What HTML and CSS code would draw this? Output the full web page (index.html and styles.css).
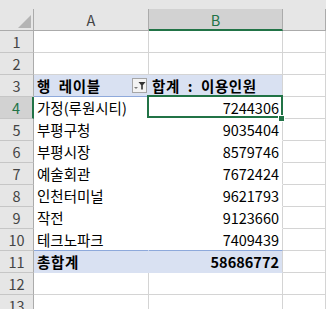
FILE: index.html
```html
<!DOCTYPE html>
<html>
<head>
    <title>피벗 테이블</title>
    <link rel="stylesheet" href="styles.css">
</head>
<body>
    <div class="sheet">
        <div class="strip"></div>
        <div class="row head">
            <div class="corner"><span class="tri"></span></div>
            <div class="col">A</div>
            <div class="col sel">B</div>
            <div class="col"></div>
        </div>

        <div class="row"><div class="num">1</div><div></div><div></div><div></div></div>
        <div class="row"><div class="num">2</div><div></div><div></div><div></div></div>

        <div class="row">
            <div class="num">3</div>
            <div class="hd a label">
                <span>행 레이블</span>
                <svg class="filter" width="15" height="15" viewBox="0 0 15 15">
                    <rect x="0.5" y="0.5" width="14" height="14" fill="#f3f3f3" stroke="#a6a6a6"/>
                    <path d="M2 9h4l-2 2z" fill="#7a7a7a"/>
                    <path d="M6.5 4h7l-2.7 3.2v4.3h-1.6v-4.3z" fill="#333"/>
                </svg>
            </div>
            <div class="hd">합계 : 이용인원</div>
            <div></div>
        </div>

        <div class="row">
            <div class="num on">4</div>
            <div class="it a">가정(루원시티)</div>
            <div class="it val cur">7244306</div>
            <div></div>
        </div>
        <div class="row"><div class="num">5</div><div class="it a">부평구청</div><div class="it val">9035404</div><div></div></div>
        <div class="row"><div class="num">6</div><div class="it a">부평시장</div><div class="it val">8579746</div><div></div></div>
        <div class="row"><div class="num">7</div><div class="it a">예술회관</div><div class="it val">7672424</div><div></div></div>
        <div class="row"><div class="num">8</div><div class="it a">인천터미널</div><div class="it val">9621793</div><div></div></div>
        <div class="row"><div class="num">9</div><div class="it a">작전</div><div class="it val">9123660</div><div></div></div>
        <div class="row"><div class="num">10</div><div class="it a last">테크노파크</div><div class="it val last">7409439</div><div></div></div>

        <div class="row">
            <div class="num">11</div>
            <div class="tot a">총합계</div>
            <div class="tot val">58686772</div>
            <div></div>
        </div>

        <div class="row"><div class="num">12</div><div></div><div></div><div></div></div>
        <div class="row"><div class="num">13</div><div></div><div></div><div></div></div>
    </div>
</body>
</html>
```

FILE: styles.css
```css
body {
    margin: 0;
    background-color: #fff;
    font-family: "Noto Sans CJK KR", "Noto Sans", sans-serif;
    font-size: 14.5px;
    color: #000;
}
.sheet {
    width: 326px;
    height: 309px;
    overflow: hidden;
}
.strip {
    height: 9px;
    background-color: #e6e6e6;
}
.row {
    display: grid;
    grid-template-columns: 34px 115px 134px 1fr;
    height: 22px;
}
.row > div {
    box-sizing: border-box;
    border-right: 1px solid #d4d4d4;
    border-bottom: 1px solid #d4d4d4;
    line-height: 21px;
    padding: 0 3px;
    white-space: nowrap;
    overflow: hidden;
}

/* column headers */
.head > div {
    background-color: #e6e6e6;
    border-color: #ababab;
    color: #444;
    text-align: center;
}
.head .sel {
    background-color: #d2d2d2;
    color: #217346;
    border-bottom: 2px solid #217346;
}
.head .corner {
    display: flex;
    justify-content: flex-end;
    align-items: flex-end;
    padding: 0 2px 2px 0;
}
.tri {
    width: 0;
    height: 0;
    border-left: 13px solid transparent;
    border-bottom: 13px solid #b4b4b4;
}

/* row numbers */
.row .num {
    background-color: #e6e6e6;
    color: #444;
    text-align: center;
    padding: 0;
    border-right-color: #ababab;
    border-bottom-color: #c6c6c6;
}
.row .num.on {
    background-color: #d2d2d2;
    color: #217346;
    border-right: 2px solid #217346;
}

/* pivot table */
.row .hd,
.row .tot {
    background-color: #d9e1f2;
    font-weight: bold;
    letter-spacing: 0.6px;
}
.row .hd {
    border-bottom-color: #8ea9db;
    word-spacing: 4px;
}
.row .tot {
    border-bottom-color: #d9e1f2;
}
.row .tot.val {
    letter-spacing: 0;
}
.row .hd.a,
.row .tot.a {
    border-right-color: #d9e1f2;
}
.row .it {
    border-bottom-color: #fff;
}
.row .it.a {
    border-right-color: #fff;
}
.row .it.last {
    border-bottom-color: #8ea9db;
}
.val {
    text-align: right;
}
.row .label {
    display: flex;
    align-items: center;
    justify-content: space-between;
    padding-right: 1px;
}
.filter {
    display: block;
}

/* active cell */
.row .cur {
    position: relative;
    overflow: visible;
}
.row .cur::after {
    content: "";
    position: absolute;
    left: -2px;
    top: -2px;
    right: -1px;
    bottom: 0;
    border: 2px solid #217346;
}
.row .cur::before {
    content: "";
    position: absolute;
    left: 129px;
    top: 18px;
    width: 5px;
    height: 5px;
    background-color: #217346;
    border: 1px solid #fff;
    z-index: 1;
}
```
